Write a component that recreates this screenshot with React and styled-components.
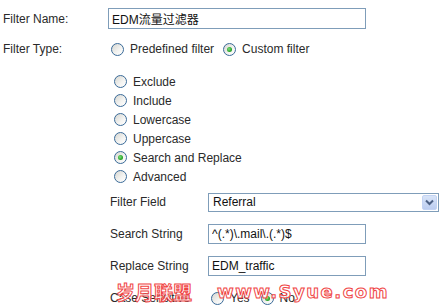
import styled, { createGlobalStyle } from 'styled-components'

const GlobalStyle = createGlobalStyle`
  html, body {
    margin: 0;
    padding: 0;
    background: #ffffff;
  }
  body {
    font-family: "Liberation Sans", Arial, "Noto Sans CJK SC", sans-serif;
    font-size: 12px;
    color: #2a2a2a;
  }
`

const Page = styled.div`
  position: relative;
  width: 443px;
  height: 305px;
  padding: 8px 0 0 3px;
  box-sizing: border-box;
  overflow: hidden;
`

const Row = styled.div`
  display: flex;
  align-items: center;
  height: ${p => p.$h || 21}px;
  margin-top: ${p => p.$top || 0}px;
`

const Label = styled.div`
  width: ${p => p.$w || 105}px;
  flex-shrink: 0;
`

const TextBox = styled.input`
  box-sizing: border-box;
  width: ${p => p.$w}px;
  height: ${p => p.$h || 20}px;
  border: 1px solid #7f9db9;
  padding: 0 3px;
  margin: 0;
  font-family: "Liberation Sans", Arial, "Noto Sans CJK SC", sans-serif;
  font-size: 12px;
  color: #111;
  background: #fff;
  outline: none;
`

const Choice = styled.label`
  display: flex;
  align-items: center;
  gap: 6px;
  margin-right: ${p => p.$gap || 0}px;
`

const Radio = styled.input.attrs({ type: 'radio' })`
  appearance: none;
  -webkit-appearance: none;
  width: 13px;
  height: 13px;
  margin: 0;
  border: 1px solid #3a6a98;
  border-radius: 50%;
  box-sizing: border-box;
  background: linear-gradient(135deg, #d6d6d0 0%, #f4f4f2 60%, #ffffff 100%);
  position: relative;
  flex-shrink: 0;

  &:checked::after {
    content: '';
    position: absolute;
    left: 3px;
    top: 3px;
    width: 5px;
    height: 5px;
    border-radius: 50%;
    background: radial-gradient(circle at 40% 40%, #7ee07e 0%, #2aa62a 60%, #1d8a1d 100%);
  }
`

const Group = styled.div`
  display: flex;
  align-items: center;
  padding-left: ${p => p.$pad || 0}px;
`

const Options = styled.div`
  display: flex;
  flex-direction: column;
  margin: 16px 0 0 111px;
`

const Option = styled(Choice)`
  height: 19px;
`

const SubForm = styled.div`
  display: grid;
  grid-template-columns: 98px auto;
  grid-auto-rows: 32px;
  align-items: center;
  margin-left: 107px;
`

const Select = styled.div`
  box-sizing: border-box;
  width: 231px;
  height: 19px;
  border: 1px solid #7f9db9;
  display: flex;
  align-items: center;
  justify-content: space-between;
  padding-left: 4px;
  color: #111;
`

const DropButton = styled.span`
  width: 15px;
  height: 15px;
  margin-right: 1px;
  border-radius: 2px;
  background: linear-gradient(180deg, #d8e4f8 0%, #bccdf0 100%);
  border: 1px solid #c3d3f3;
  box-sizing: border-box;
  display: flex;
  align-items: center;
  justify-content: center;
`

const Watermark = styled.div`
  position: absolute;
  left: 116px;
  top: 281px;
  display: flex;
  align-items: center;
  gap: 25px;
  pointer-events: none;
`

const MarkText = styled.span`
  font-family: ${p => (p.$cjk ? '"Noto Sans CJK SC", sans-serif' : '"DejaVu Sans", sans-serif')};
  font-size: ${p => (p.$cjk ? 19 : 18)}px;
  font-weight: bold;
  letter-spacing: ${p => (p.$cjk ? 0 : 1.5)}px;
  color: rgba(255, 255, 255, 0.75);
  -webkit-text-stroke: 1px #f04545;
  line-height: 22px;
`

const filterOptions = [
  { label: 'Exclude' },
  { label: 'Include' },
  { label: 'Lowercase' },
  { label: 'Uppercase' },
  { label: 'Search and Replace', checked: true },
  { label: 'Advanced' },
]

function App() {
  return (
    <Page>
      <GlobalStyle />
      <Row>
        <Label>Filter Name:</Label>
        <TextBox $w={258} $h={21} defaultValue="EDM流量过滤器" />
      </Row>

      <Row $top={13} $h={14}>
        <Label>Filter Type:</Label>
        <Group $pad={3}>
          <Choice $gap={9}>
            <Radio name="ftype" />
            Predefined filter
          </Choice>
          <Choice>
            <Radio name="ftype" defaultChecked />
            Custom filter
          </Choice>
        </Group>
      </Row>

      <Options>
        {filterOptions.map(opt => (
          <Option key={opt.label}>
            <Radio name="custom" defaultChecked={opt.checked} />
            {opt.label}
          </Option>
        ))}
      </Options>

      <SubForm>
        <span>Filter Field</span>
        <Select>
          Referral
          <DropButton>
            <svg width="9" height="7" viewBox="0 0 9 7">
              <path d="M1 1.5 L4.5 5 L8 1.5" fill="none" stroke="#4d6185" strokeWidth="2" />
            </svg>
          </DropButton>
        </Select>

        <span>Search String</span>
        <TextBox $w={158} defaultValue="^(.*)\.mail\.(.*)$" />

        <span>Replace String</span>
        <TextBox $w={158} defaultValue="EDM_traffic" />

        <span>Case Sensitive</span>
        <Group $pad={3}>
          <Choice $gap={11}>
            <Radio name="case" />
            Yes
          </Choice>
          <Choice>
            <Radio name="case" defaultChecked />
            No
          </Choice>
        </Group>
      </SubForm>

      <Watermark>
        <MarkText $cjk>岁月联盟</MarkText>
        <MarkText>www.Syue.com</MarkText>
      </Watermark>
    </Page>
  )
}

export default App
